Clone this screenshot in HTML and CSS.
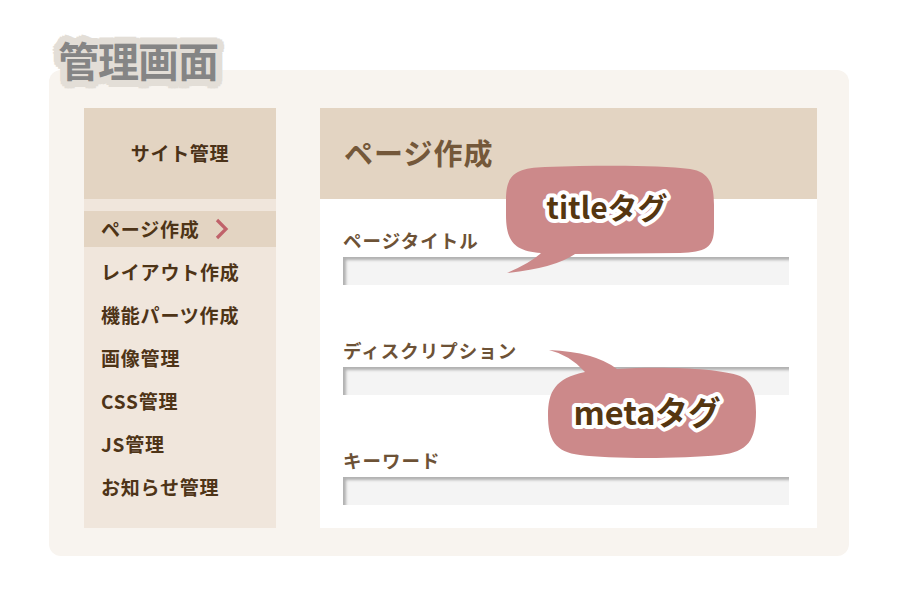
FILE: index.html
```html
<!DOCTYPE html>
<html lang="ja">
<head>
<meta charset="utf-8">
<title>管理画面</title>
<link rel="stylesheet" href="styles.css">
</head>
<body>
<div class="stage">
  <h1 class="badge">管理画面</h1>
  <div class="panel">
    <aside class="sidebar">
      <div class="side-head">サイト管理</div>
      <ul class="side-nav">
        <li class="active"><span>ページ作成</span><svg class="chev" width="14" height="22" viewBox="0 0 14 22"><polyline points="2,2 11,11 2,20" fill="none" stroke="#c0626a" stroke-width="3.2"/></svg></li>
        <li><span>レイアウト作成</span></li>
        <li><span>機能パーツ作成</span></li>
        <li><span>画像管理</span></li>
        <li><span>CSS管理</span></li>
        <li><span>JS管理</span></li>
        <li><span>お知らせ管理</span></li>
      </ul>
    </aside>
    <main class="main">
      <div class="main-head">ページ作成</div>
      <div class="form">
        <div class="field"><label>ページタイトル</label><div class="input"></div></div>
        <div class="field"><label>ディスクリプション</label><div class="input"></div></div>
        <div class="field"><label>キーワード</label><div class="input"></div></div>
      </div>
      <svg class="bubble bubble-title" width="220" height="125" viewBox="500 160 220 125">
        <path class="bubble-fill" d="M545 167 C600 165 660 165 690 169 C710 172 714 185 714 205 L714 228 C714 248 705 252 680 253 L575 254 Q555 268 507 273 Q532 262 541 253 C515 251 506 242 506 215 L506 200 C506 175 515 168 545 167 Z"/>
        <text class="bubble-text" x="607" y="219" font-size="30">titleタグ</text>
      </svg>
      <svg class="bubble bubble-meta" width="225" height="120" viewBox="540 345 225 120">
        <path class="bubble-fill" d="M617 369 C660 366 720 368 740 376 C753 382 756 395 756 412 C756 440 748 452 720 455 C680 459 610 459 580 455 C555 452 548 440 548 415 C548 392 555 378 585 372 Q570 355 549 350 Q595 352 617 369 Z"/>
        <text class="bubble-text" x="647" y="425" font-size="32.5">metaタグ</text>
      </svg>
    </main>
  </div>
</div>
</body>
</html>
```

FILE: styles.css
```css
* { box-sizing: border-box; }

body {
  margin: 0;
  background: #ffffff;
  font-family: "Noto Sans CJK JP", "Noto Sans", sans-serif;
}

.stage {
  position: relative;
  width: 900px;
  height: 600px;
  padding: 70px 0 0 49px;
}

.badge {
  position: absolute;
  left: 58px;
  top: 39px;
  margin: 0;
  z-index: 2;
  font-size: 41px;
  line-height: 1;
  font-weight: 700;
  letter-spacing: -1px;
  color: #858585;
  text-shadow:
    7px 0 0 #e3ded7, -7px 0 0 #e3ded7, 0 7px 0 #e3ded7, 0 -7px 0 #e3ded7,
    5px 5px 0 #e3ded7, -5px 5px 0 #e3ded7, 5px -5px 0 #e3ded7, -5px -5px 0 #e3ded7,
    6.5px 2.7px 0 #e3ded7, -6.5px 2.7px 0 #e3ded7, 6.5px -2.7px 0 #e3ded7, -6.5px -2.7px 0 #e3ded7,
    2.7px 6.5px 0 #e3ded7, -2.7px 6.5px 0 #e3ded7, 2.7px -6.5px 0 #e3ded7, -2.7px -6.5px 0 #e3ded7,
    3px 0 0 #e3ded7, -3px 0 0 #e3ded7, 0 3px 0 #e3ded7, 0 -3px 0 #e3ded7;
}

.panel {
  width: 800px;
  height: 486px;
  background: #f8f4ef;
  border-radius: 12px;
  padding: 38px 32px 28px 35px;
  display: flex;
  gap: 44px;
}

.sidebar {
  width: 192px;
  background: #f0e6dc;
  display: flex;
  flex-direction: column;
}

.side-head {
  height: 91px;
  padding-bottom: 3px;
  background: #e3d4c2;
  display: flex;
  align-items: center;
  justify-content: center;
  font-size: 19px;
  font-weight: 700;
  letter-spacing: 0.7px;
  color: #4b3218;
}

.side-nav {
  list-style: none;
  margin: 0;
  padding: 12px 0 0;
}

.side-nav li {
  height: 36px;
  margin-bottom: 7px;
  padding-left: 17px;
  padding-bottom: 2px;
  display: flex;
  align-items: center;
  gap: 15px;
  font-size: 19px;
  font-weight: 700;
  letter-spacing: 0.8px;
  color: #4e3417;
}

.side-nav li.active {
  background: #e3d4c2;
}

.chev { display: block; margin-top: 2px; }

.main {
  flex: 1;
  background: #ffffff;
  position: relative;
}

.main-head {
  height: 91px;
  padding-bottom: 3px;
  background: #e3d4c2;
  display: flex;
  align-items: center;
  padding-left: 24px;
  font-size: 29px;
  font-weight: 700;
  letter-spacing: 1px;
  color: #74583a;
}

.form {
  padding: 30px 28px 0 23px;
}

.field + .field {
  margin-top: 54px;
}

.field label {
  display: block;
  font-size: 18.5px;
  line-height: 22px;
  font-weight: 700;
  letter-spacing: 1px;
  color: #6d5236;
}

.input {
  height: 28px;
  margin-top: 6px;
  background: #f4f4f4;
  box-shadow: inset 3px 3px 3px rgba(0, 0, 0, 0.28);
}

.bubble {
  position: absolute;
  display: block;
}

.bubble-title { left: 180px; top: 52px; }
.bubble-meta { left: 220px; top: 237px; }

.bubble-fill { fill: #cc898a; }

.bubble-text {
  font-family: "Noto Sans CJK JP", "Noto Sans", sans-serif;
  font-weight: 700;
  text-anchor: middle;
  fill: #553610;
  stroke: #ffffff;
  stroke-width: 8px;
  stroke-linejoin: round;
  paint-order: stroke;
}
```
